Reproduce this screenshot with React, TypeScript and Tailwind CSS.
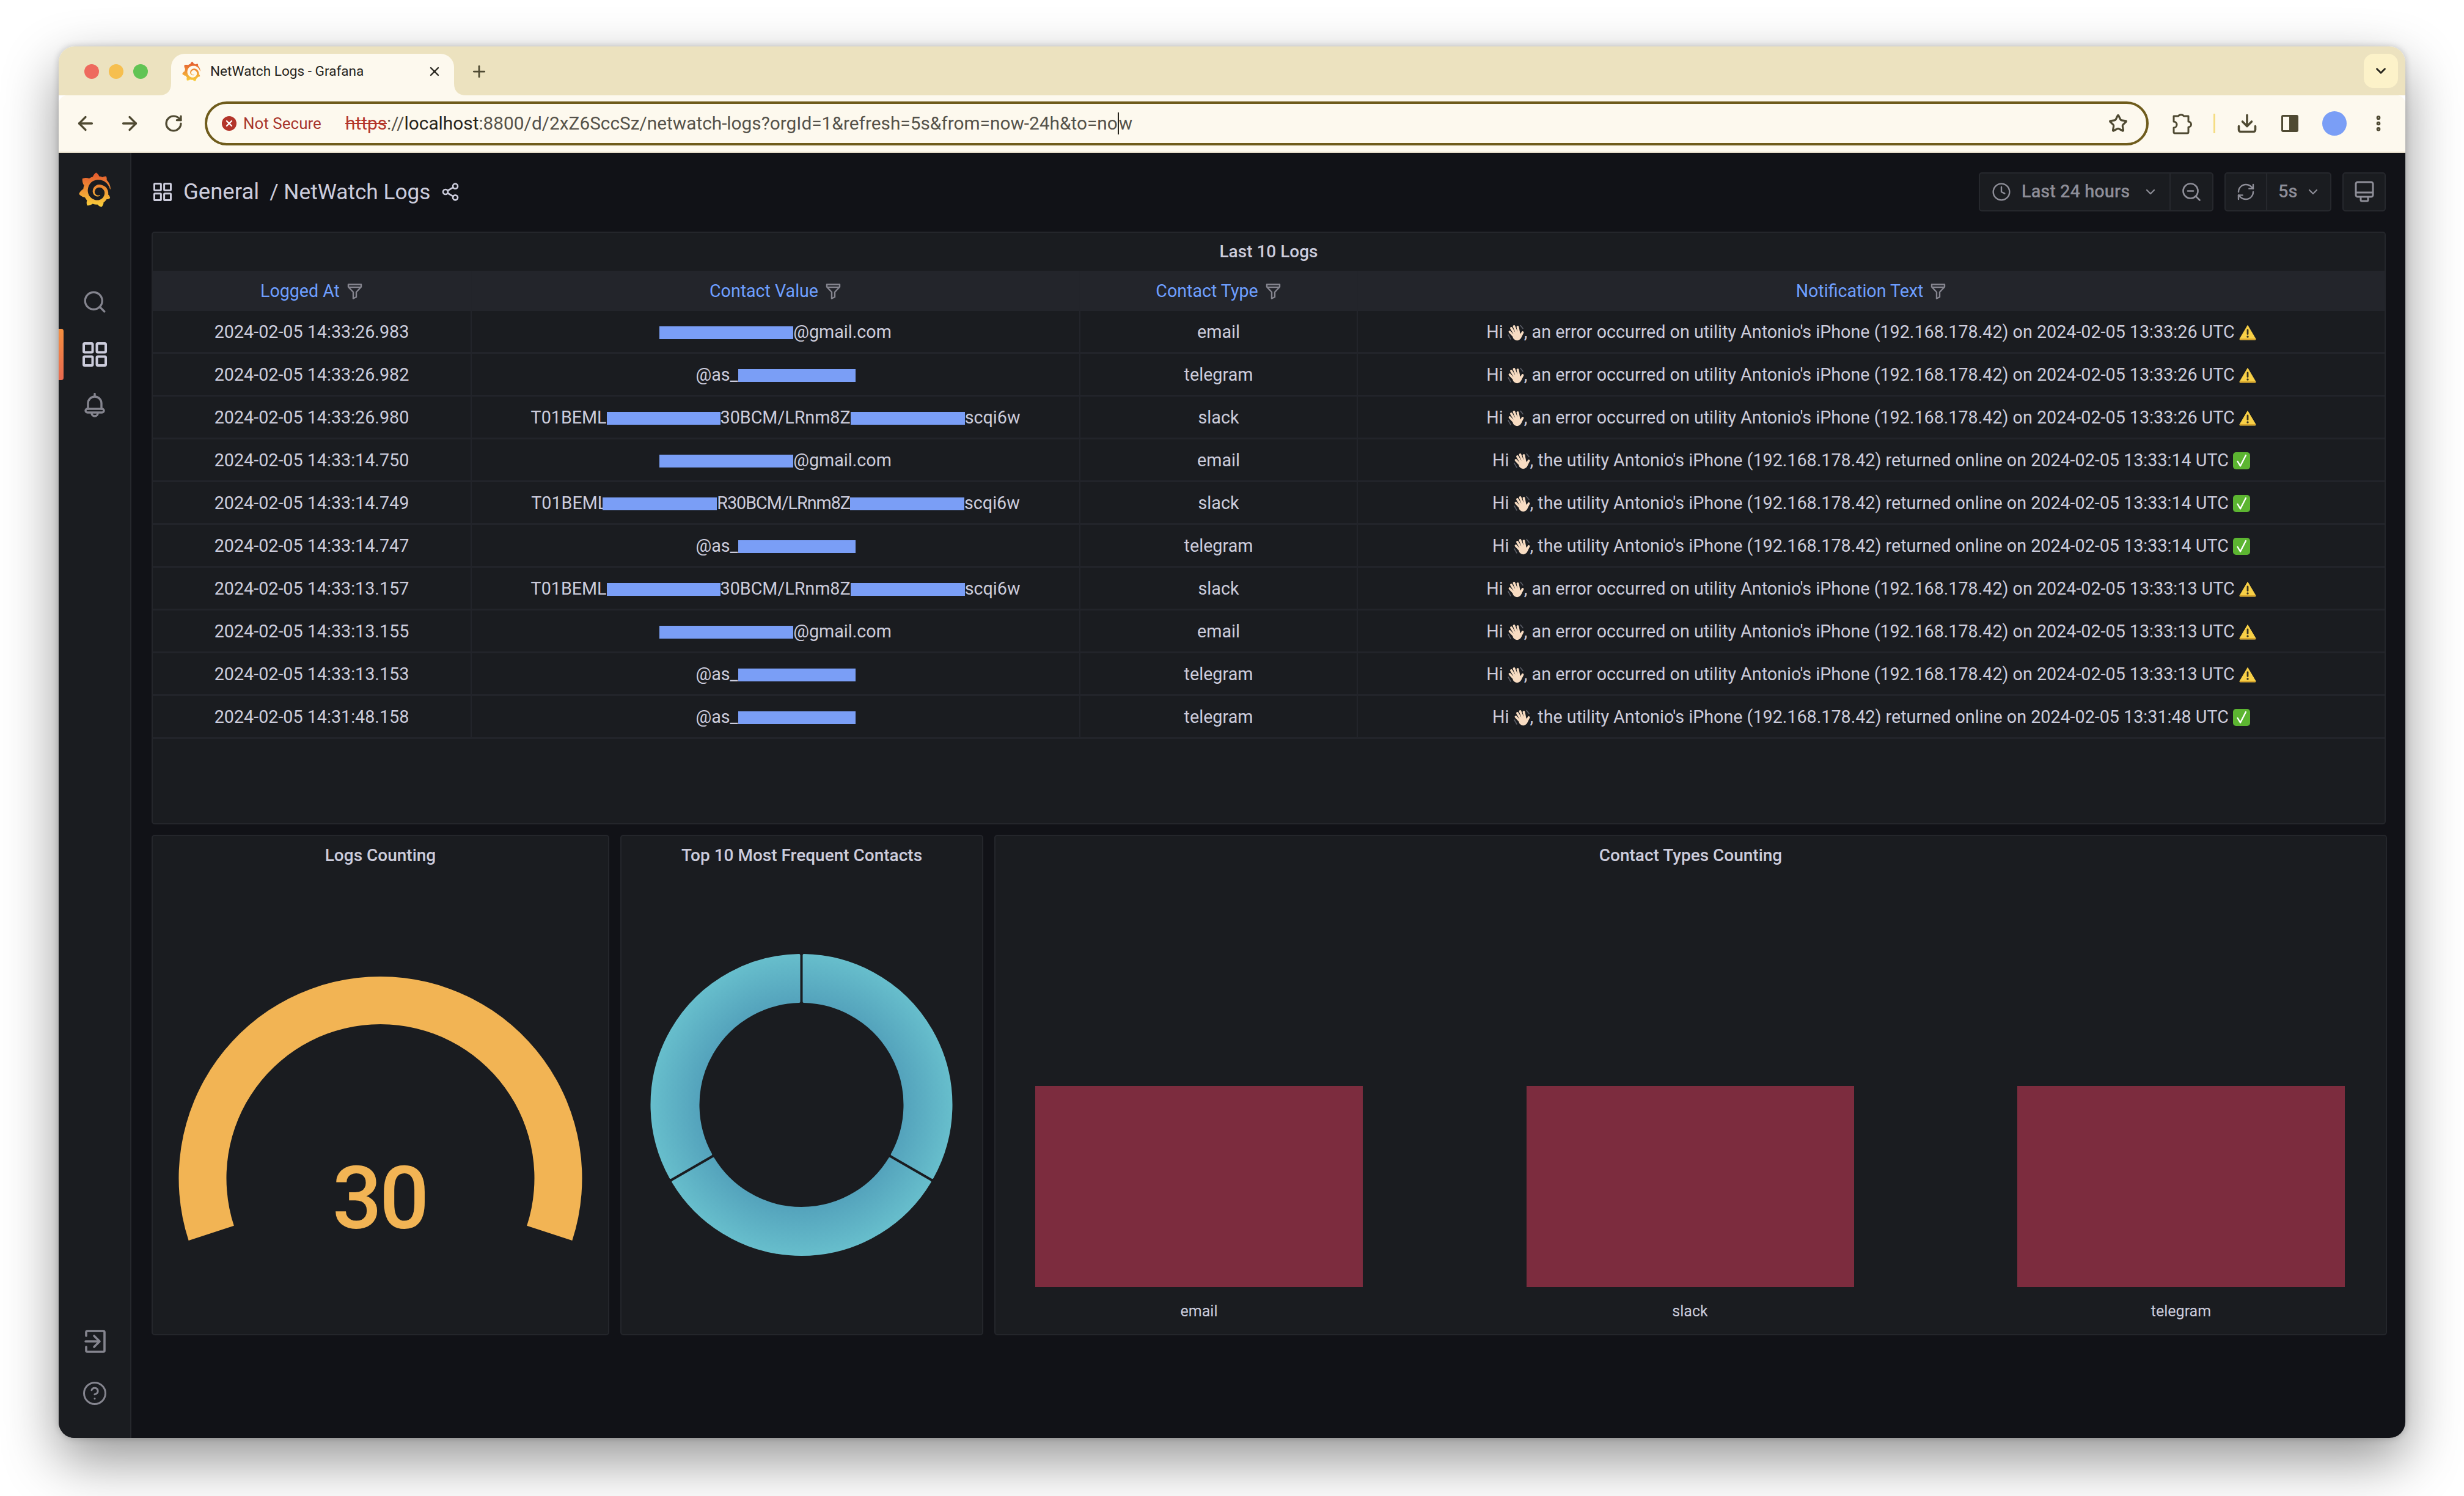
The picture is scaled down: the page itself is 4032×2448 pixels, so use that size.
import React from "react";
import { ArrowLeft, ArrowRight, RotateCw, X, Plus, Star, Download, EllipsisVertical, ChevronDown, Search, CircleHelp, Share2, Clock, ZoomOut, RefreshCw } from "lucide-react";
import { SiGrafana } from "react-icons/si";

const Logo = ({ className }: { className: string }) => <SiGrafana className={className} fill="url(#gf)" />;

const GridIcon = ({ className }: { className: string }) => (
  <svg viewBox="0 0 40 40" className={className} fill="none" stroke="currentColor" strokeWidth="4">
    <rect x="2" y="2" width="14.5" height="14.5" rx="1.5" />
    <rect x="23.5" y="2" width="14.5" height="14.5" rx="1.5" />
    <rect x="2" y="23.5" width="14.5" height="14.5" rx="1.5" />
    <rect x="23.5" y="23.5" width="14.5" height="14.5" rx="1.5" />
  </svg>
);

const BellIcon = () => (
  <svg viewBox="0 0 40 40" className="w-[40px] h-[40px] text-[#85858f]" fill="none" stroke="currentColor" strokeWidth="3.4" strokeLinecap="round">
    <path d="M20 1.5V5" />
    <path d="M9 26V17a11 11 0 0 1 22 0v9" />
    <rect x="5" y="26" width="30" height="6" rx="3" />
    <path d="M15 33a5 5 0 0 0 10 0" />
  </svg>
);

const LoginIcon = () => (
  <svg viewBox="0 0 40 40" className="w-[40px] h-[40px] text-[#85858f]" fill="none" stroke="currentColor" strokeWidth="3.6" strokeLinecap="round" strokeLinejoin="round">
    <path d="M6 11V5a2 2 0 0 1 2-2h26a2 2 0 0 1 2 2v30a2 2 0 0 1-2 2H8a2 2 0 0 1-2-2v-6" />
    <path d="M5 20h23M19 11l9 9-9 9" />
  </svg>
);

const PuzzleIcon = () => (
  <svg viewBox="0 0 34 36" className="ml-[37px] w-[34px] h-[36px]" fill="none" stroke="currentColor" strokeWidth="3" strokeLinejoin="round">
    <path d="M4 6h7.500a5 4 0 0 1 9 0H28v9a4.500 4.500 0 0 1 0 9v8a2 2 0 0 1-2 2H6a2 2 0 0 1-2-2v-7a5 5 0 0 0 0-10z" />
  </svg>
);

const Filter = () => (
  <svg viewBox="0 0 27 27" className="w-[27px] h-[27px] ml-[11px] shrink-0 text-[#85858f]" fill="none" stroke="currentColor" strokeWidth="2.4" strokeLinejoin="round">
    <path d="M3 2.500h21v4l-8 8.500v8l-5 2.500V15L3 6.500z" />
    <path d="M3 7h21" />
  </svg>
);

const TvIcon = () => (
  <svg viewBox="0 0 32 36" className="w-[32px] h-[36px]" fill="none" stroke="currentColor" strokeWidth="3" strokeLinejoin="round">
    <rect x="2" y="2" width="28" height="24" rx="3" />
    <path d="M2 19h28" />
    <path d="M10 26v5a2 2 0 0 0 2 2h8a2 2 0 0 0 2-2v-5" />
  </svg>
);

const Hand = () => (
  <svg viewBox="0 0 27 27" className="w-[27px] h-[27px] shrink-0" fill="none" strokeLinecap="round">
    <path d="M21 1.500l4 5M1 17l4 7" stroke="#5a5d66" strokeWidth="1.6" />
    <g stroke="#f8dcc2" strokeWidth="3.8">
      <path d="M11 20L3.500 12" />
      <path d="M12 16L6 6" />
      <path d="M15 14L10.500 3" />
      <path d="M18.500 14L16.500 4" />
      <path d="M21 20l3.500-7" />
    </g>
    <circle cx="15.500" cy="19" r="7.200" fill="#f8dcc2" />
  </svg>
);

const Warn = () => (
  <svg viewBox="0 0 28 26" className="w-[28px] h-[26px] shrink-0">
    <path d="M14 1.500L27 23.500a1 1 0 0 1-1 1.500H2a1 1 0 0 1-1-1.500z" fill="#f8d047" stroke="#f8d047" strokeLinejoin="round" />
    <path d="M1 23h26l-.3 1.400a1 1 0 0 1-.7.6H2a1 1 0 0 1-.7-.6z" fill="#d9a52c" />
    <rect x="12.600" y="7.500" width="2.800" height="9.500" rx="1.400" fill="#3a3320" />
    <circle cx="14" cy="20" r="1.700" fill="#3a3320" />
  </svg>
);

const Check = () => (
  <svg viewBox="0 0 28 28" className="w-[28px] h-[28px] shrink-0">
    <rect width="28" height="28" rx="5" fill="#5cb531" />
    <path d="M7.500 15l4.500 7.500L21 5" fill="none" stroke="#fff" strokeWidth="2.4" strokeLinecap="round" strokeLinejoin="round" />
  </svg>
);

const Mask = ({ w, className = "" }: { w: number; className?: string }) => <span className={`inline-block h-[21px] bg-[#7a9ef6] shrink-0 ${className}`} style={{ width: w }} />;

const Email = () => (<><Mask w={219} /><span>@gmail.com</span></>);
const Tg = () => (<><span>@as_</span><Mask w={192} /></>);
const Slack = () => (
  <><span>T01BEML</span><Mask w={186} /><span>30BCM/LRnm8Z</span><Mask w={187} /><span>scqi6w</span></>
);
const SlackAlt = () => (
  <><span>T01BEML</span><Mask w={187} className="-ml-[7px] relative z-10" /><span className="tracking-[-1px]">R30BCM/LRnm8Z</span><Mask w={187} /><span>scqi6w</span></>
);

type Row = { at: string; c: React.ReactNode; t: string; kind: "err" | "ok"; when: string };
const rows: Row[] = [
  { at: "2024-02-05 14:33:26.983", c: <Email />, t: "email", kind: "err", when: "2024-02-05 13:33:26" },
  { at: "2024-02-05 14:33:26.982", c: <Tg />, t: "telegram", kind: "err", when: "2024-02-05 13:33:26" },
  { at: "2024-02-05 14:33:26.980", c: <Slack />, t: "slack", kind: "err", when: "2024-02-05 13:33:26" },
  { at: "2024-02-05 14:33:14.750", c: <Email />, t: "email", kind: "ok", when: "2024-02-05 13:33:14" },
  { at: "2024-02-05 14:33:14.749", c: <SlackAlt />, t: "slack", kind: "ok", when: "2024-02-05 13:33:14" },
  { at: "2024-02-05 14:33:14.747", c: <Tg />, t: "telegram", kind: "ok", when: "2024-02-05 13:33:14" },
  { at: "2024-02-05 14:33:13.157", c: <Slack />, t: "slack", kind: "err", when: "2024-02-05 13:33:13" },
  { at: "2024-02-05 14:33:13.155", c: <Email />, t: "email", kind: "err", when: "2024-02-05 13:33:13" },
  { at: "2024-02-05 14:33:13.153", c: <Tg />, t: "telegram", kind: "err", when: "2024-02-05 13:33:13" },
  { at: "2024-02-05 14:31:48.158", c: <Tg />, t: "telegram", kind: "ok", when: "2024-02-05 13:31:48" },
];

const Notif = ({ kind, when }: { kind: "err" | "ok"; when: string }) => (
  <>
    <span>Hi </span>
    <Hand />
    <span>{kind === "err"
      ? `, an error occurred on utility Antonio's iPhone (192.168.178.42) on ${when} UTC `
      : `, the utility Antonio's iPhone (192.168.178.42) returned online on ${when} UTC `}</span>
    {kind === "err" ? <Warn /> : <Check />}
  </>
);

const polar = (cx: number, cy: number, r: number, deg: number) => {
  const a = (deg * Math.PI) / 180;
  return [cx + r * Math.sin(a), cy - r * Math.cos(a)];
};

const seg = (start: number, end: number) => {
  const cx = 1311.5, cy = 1808, R = 245, r = 169, g = 4;
  const oa = (g / R) * (180 / Math.PI), ia = (g / r) * (180 / Math.PI);
  const [x1, y1] = polar(cx, cy, R, start + oa);
  const [x2, y2] = polar(cx, cy, R, end - oa);
  const [x3, y3] = polar(cx, cy, r, end - ia);
  const [x4, y4] = polar(cx, cy, r, start + ia);
  return `M${x1} ${y1}A${R} ${R} 0 0 1 ${x2} ${y2}L${x3} ${y3}A${r} ${r} 0 0 0 ${x4} ${y4}Z`;
};

const gauge = () => {
  const cx = 622.5, cy = 1928, R = 330, r = 252;
  const [a, b] = polar(cx, cy, R, -108);
  const [c, d] = polar(cx, cy, R, 108);
  const [e, f] = polar(cx, cy, r, 108);
  const [g, h] = polar(cx, cy, r, -108);
  return `M${a} ${b}A${R} ${R} 0 1 1 ${c} ${d}L${e} ${f}A${r} ${r} 0 1 0 ${g} ${h}Z`;
};

const panel = "bg-[#1a1c20] border-2 border-[#24262b] rounded-[5px]";
const title = "h-[64px] flex items-center justify-center text-[28px] font-medium text-[#ccccdc]";
const cols = "grid grid-cols-[522px_996px_454px_1fr]";
const Sep = "border-r-2 border-[#22242a]";
const chromeIcon = "text-[#4f4a32]";

export default function App() {
  return (
    <div className="w-[4032px] h-[2448px] bg-white pl-[96px] pt-[76px] overflow-hidden font-['Roboto',sans-serif]">
      <svg width="0" height="0" className="absolute">
        <defs>
          <linearGradient id="gf" x1="0" y1="0" x2="0" y2="1">
            <stop offset="0" stopColor="#e4572e" />
            <stop offset="1" stopColor="#f9d03b" />
          </linearGradient>
        </defs>
      </svg>
      <div className="w-[3840px] h-[2277px] rounded-[26px] overflow-hidden flex flex-col shadow-[0_36px_90px_rgba(0,0,0,0.42),0_0_12px_rgba(0,0,0,0.2)]">
        {/* tab strip */}
        <div className="h-[80px] shrink-0 bg-[#ece2bf] flex items-end relative">
          <div className="flex gap-[16px] pl-[42px] h-[68px] items-start pt-[17px] w-[184px] shrink-0">
            <span className="w-[24px] h-[24px] rounded-full bg-[#ee6a5e] shrink-0" />
            <span className="w-[24px] h-[24px] rounded-full bg-[#f6bf4f] shrink-0" />
            <span className="w-[24px] h-[24px] rounded-full bg-[#61c454] shrink-0" />
          </div>
          <div className="relative w-[463px] h-[68px] bg-[#fdf9ee] rounded-t-[22px] flex items-center pl-[17px] pr-[20px] pb-[10px]">
            <svg viewBox="0 0 20 20" className="absolute -left-[20px] bottom-0 w-[20px] h-[20px]"><path d="M0 20Q20 20 20 0V20Z" fill="#fdf9ee" /></svg>
            <svg viewBox="0 0 20 20" className="absolute -right-[20px] bottom-0 w-[20px] h-[20px]"><path d="M20 20Q0 20 0 0V20Z" fill="#fdf9ee" /></svg>
            <Logo className="w-[32px] h-[32px] shrink-0" />
            <span className="ml-[15px] text-[22.6px] text-[#26241c] whitespace-nowrap flex-1">NetWatch Logs - Grafana</span>
            <X className="w-[24px] h-[24px] text-[#26241c]" strokeWidth={2.4} />
          </div>
          <div className="h-[68px] flex items-center ml-[26px] pb-[10px]">
            <Plus className={`w-[30px] h-[30px] ${chromeIcon}`} strokeWidth={2.2} />
          </div>
          <div className="ml-auto mr-[12px] mb-[12px] w-[56px] h-[56px] rounded-[16px] bg-[#fcf2c9] flex items-center justify-center">
            <ChevronDown className="w-[26px] h-[26px] text-[#26241c]" strokeWidth={2.6} />
          </div>
        </div>
        {/* toolbar */}
        <div className="h-[94px] shrink-0 bg-[#fdf9ee] rounded-t-[14px] flex items-center border-b-2 border-[#eee6d2] relative">
          <div className="flex items-center pl-[26px] gap-[36px] w-[239px] shrink-0">
            <ArrowLeft className={`w-[36px] h-[36px] ${chromeIcon}`} strokeWidth={2.2} />
            <ArrowRight className={`w-[36px] h-[36px] ${chromeIcon}`} strokeWidth={2.2} />
            <RotateCw className={`ml-[2px] w-[32px] h-[32px] ${chromeIcon}`} strokeWidth={2.4} />
          </div>
          <div className="w-[3181px] h-[72px] border-[4px] border-[#6f5c1c] rounded-full flex items-center pl-[24px] pr-[30px] text-[29.8px] whitespace-nowrap">
            <span className="w-[24px] h-[24px] rounded-full bg-[#b3352a] text-white flex items-center justify-center shrink-0">
              <X className="w-[16px] h-[16px]" strokeWidth={3.4} />
            </span>
            <span className="ml-[11px] text-[26px] text-[#a8352b] w-[167px] shrink-0">Not Secure</span>
            <span className="text-[#b3352a] line-through">https</span>
            <span className="text-[#55524a]">://</span>
            <span className="text-[#26241c]">localhost</span>
            <span className="text-[#55524a]">:8800/d/2xZ6SccSz/netwatch-logs?orgId=1&amp;refresh=5s&amp;from=now-24h&amp;to=no</span>
            <span className="inline-block w-0 h-[36px] border-l-2 border-[#26241c]" />
            <span className="text-[#55524a]">w</span>
            <Star className={`ml-auto w-[32px] h-[32px] ${chromeIcon}`} strokeWidth={2.4} />
          </div>
          <div className="flex items-center flex-1 text-[#4f4a32]">
            <PuzzleIcon />
            <span className="ml-[35px] w-[3px] h-[32px] bg-[#f5dd83]" />
            <Download className="ml-[34px] w-[36px] h-[36px]" strokeWidth={2.4} />
            <span className="ml-[38px] w-[28px] h-[28px] border-[3px] border-[#4f4a32] rounded-[3px] flex justify-end">
              <span className="w-[12px] bg-[#4f4a32]" />
            </span>
            <span className="ml-[39px] w-[40px] h-[40px] rounded-full bg-[#7a9ef6]" />
            <EllipsisVertical className="ml-[36px] w-[32px] h-[32px]" strokeWidth={3} />
          </div>
        </div>
        {/* app */}
        <div className="flex-1 flex bg-[#111217] min-h-0">
          <div className="relative w-[119px] shrink-0 bg-[#1a1c20] border-r-2 border-[#26282d] flex flex-col items-center pt-[32px] pb-[52px]">
            <Logo className="w-[56px] h-[57px]" />
            <Search className="mt-[134px] w-[42px] h-[42px] text-[#85858f]" strokeWidth={1.9} />
            <div className="absolute left-0 top-[288px] w-[8px] h-[84px] rounded-r-[4px] bg-gradient-to-b from-[#f58f3f] to-[#e8694f]" />
            <GridIcon className="mt-[45px] w-[40px] h-[40px] text-[#ccccdc]" />
            <div className="mt-[43px]"><BellIcon /></div>
            <div className="mt-auto"><LoginIcon /></div>
            <CircleHelp className="mt-[44px] w-[42px] h-[42px] text-[#85858f]" strokeWidth={1.7} />
          </div>
          <div className="flex-1 min-w-0 pl-[33px] pr-[30px] pt-[32px]">
            {/* dashboard header */}
            <div className="h-[64px] flex items-center mb-[33px] mr-[2px]">
              <GridIcon className="w-[30px] h-[30px] ml-[3px] text-[#ccccdc]" />
              <span className="ml-[19px] text-[36.5px] text-[#ccccdc]">General</span>
              <span className="ml-[17px] text-[35.2px] text-[#ccccdc]">/ NetWatch Logs</span>
              <Share2 className="ml-[17px] w-[32px] h-[32px] text-[#ccccdc]" strokeWidth={2} />
              <div className="ml-auto flex text-[#8e8e98] text-[29px] font-medium">
                <div className="w-[384px] h-[64px] bg-[#1a1c20] border-2 border-[#26282d] rounded-[5px] flex items-center">
                  <div className="w-[312px] self-stretch flex items-center border-r-2 border-[#26282d]">
                    <Clock className="ml-[19px] w-[32px] h-[32px] shrink-0" strokeWidth={1.8} />
                    <span className="ml-[17px] whitespace-nowrap">Last 24 hours</span>
                    <ChevronDown className="ml-[22px] w-[24px] h-[24px] shrink-0" strokeWidth={2.2} />
                  </div>
                  <div className="flex-1 self-stretch flex items-center justify-center">
                    <ZoomOut className="w-[36px] h-[36px]" strokeWidth={1.8} />
                  </div>
                </div>
                <div className="ml-[18px] w-[175px] h-[64px] bg-[#1a1c20] border-2 border-[#26282d] rounded-[5px] flex items-center">
                  <div className="w-[68px] self-stretch border-r-2 border-[#26282d] flex items-center justify-center">
                    <RefreshCw className="w-[32px] h-[32px]" strokeWidth={1.8} />
                  </div>
                  <span className="ml-[18px]">5s</span>
                  <ChevronDown className="ml-[14px] w-[24px] h-[24px]" strokeWidth={2.2} />
                </div>
                <div className="ml-[18px] w-[71px] h-[64px] bg-[#1a1c20] border-2 border-[#26282d] rounded-[5px] flex items-center justify-center">
                  <TvIcon />
                </div>
              </div>
            </div>
            {/* table */}
            <div className={`${panel} h-[970px] mr-[2px]`}>
              <div className={`${title} !h-[62px]`}>Last 10 Logs</div>
              <div className={`${cols} h-[66px] bg-[#23252b] text-[28.6px] text-[#6e9fff]`}>
                {["Logged At", "Contact Value", "Contact Type", "Notification Text"].map((h, i) => (
                  <div key={h} className={`flex items-center justify-center ${i < 3 ? Sep : ""}`}>
                    <span>{h}</span>
                    <Filter />
                  </div>
                ))}
              </div>
              {rows.map((r, i) => (
                <div key={i} className={`${cols} h-[70px] border-b-[3px] border-[#22242a] text-[28.7px] text-[#ccccdc] whitespace-pre`}>
                  <div className={`flex items-center justify-center pt-[3px] ${Sep}`}>{r.at}</div>
                  <div className={`flex items-center justify-center pt-[3px] ${Sep}`}>{r.c}</div>
                  <div className={`flex items-center justify-center pt-[3px] ${Sep}`}>{r.t}</div>
                  <div className="flex items-center justify-center pt-[3px]"><Notif kind={r.kind} when={r.when} /></div>
                </div>
              ))}
            </div>
            {/* lower panels */}
            <div className="grid grid-cols-[749px_594px_1fr] gap-[18px] mt-[17px] h-[819px]">
              <div className={`${panel} flex flex-col`}>
                <div className={title}>Logs Counting</div>
                <svg viewBox="250 1432 745 751" className="w-[745px] h-[751px]">
                  <path d={gauge()} fill="#f2b454" />
                  <text x="621" y="2010" textAnchor="middle" fontSize="143" letterSpacing="-4" fontFamily="Roboto" fontWeight="500" fill="#f2b454">30</text>
                </svg>
              </div>
              <div className={`${panel} flex flex-col`}>
                <div className={title}>Top 10 Most Frequent Contacts</div>
                <svg viewBox="1017 1432 590 751" className="w-[590px] h-[751px]">
                  <defs>
                    <radialGradient id="dn" gradientUnits="userSpaceOnUse" cx="1311.5" cy="1808" r="247">
                      <stop offset="0.68" stopColor="#54a3bc" />
                      <stop offset="1" stopColor="#67becc" />
                    </radialGradient>
                  </defs>
                  {[[0, 120], [120, 240], [240, 360]].map(([a, b]) => (
                    <path key={a} d={seg(a, b)} fill="url(#dn)" stroke="url(#dn)" strokeWidth="4" strokeLinejoin="round" />
                  ))}
                </svg>
              </div>
              <div className={`${panel} flex flex-col`}>
                <div className={title}>Contact Types Counting</div>
                <div className="flex-1 flex justify-between pl-[65px] pr-[67px] pt-[345px]">
                  {["email", "slack", "telegram"].map((l) => (
                    <div key={l} className="w-[536px] flex flex-col items-center">
                      <div className="w-full h-[329px] bg-[#7c2c3e]" />
                      <span className="mt-[21px] text-[25px] text-[#ccccdc]">{l}</span>
                    </div>
                  ))}
                </div>
              </div>
            </div>
          </div>
        </div>
      </div>
    </div>
  );
}
